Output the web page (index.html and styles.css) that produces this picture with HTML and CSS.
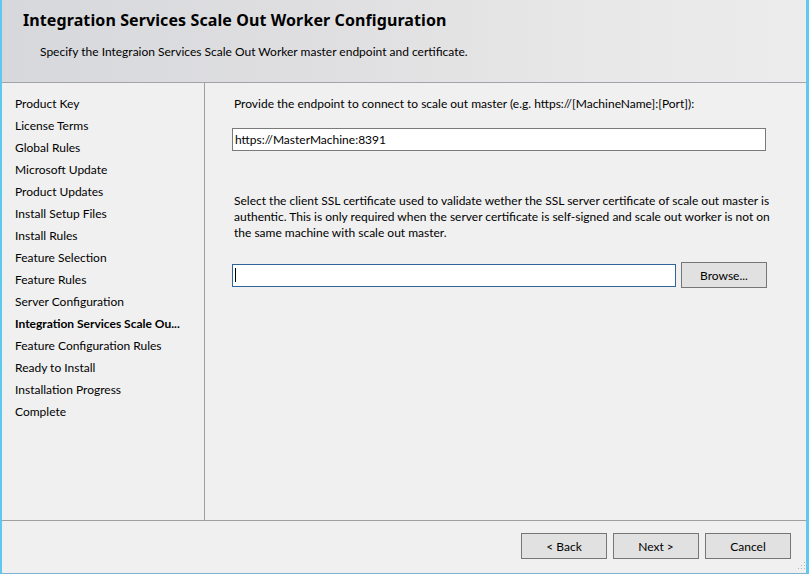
FILE: index.html
```html
<!DOCTYPE html>
<html>
<head>
<meta charset="utf-8">
<link rel="stylesheet" href="styles.css">
</head>
<body>
<div class="window">
  <div class="header">
    <h1 class="title">Integration Services Scale Out Worker Configuration</h1>
    <p class="subtitle">Specify the Integraion Services Scale Out Worker master endpoint and certificate.</p>
  </div>
  <div class="body">
    <ul class="steps">
      <li>Product Key</li>
      <li>License Terms</li>
      <li>Global Rules</li>
      <li>Microsoft Update</li>
      <li>Product Updates</li>
      <li>Install Setup Files</li>
      <li>Install Rules</li>
      <li>Feature Selection</li>
      <li>Feature Rules</li>
      <li>Server Configuration</li>
      <li class="current">Integration Services Scale Ou...</li>
      <li>Feature Configuration Rules</li>
      <li>Ready to Install</li>
      <li>Installation Progress</li>
      <li>Complete</li>
    </ul>
    <div class="content">
      <p class="label">Provide the endpoint to connect to scale out master (e.g. https://[MachineName]:[Port]):</p>
      <div class="textbox wide">https://MasterMachine:8391</div>
      <p class="para">Select the client SSL certificate used to validate wether the SSL server certificate of scale out master is<br>authentic. This is only required when the server certificate is self-signed and scale out worker is not on<br>the same machine with scale out master.</p>
      <div class="cert-row">
        <div class="textbox focused"><span class="caret"></span></div>
        <button class="btn browse">Browse...</button>
      </div>
    </div>
  </div>
  <div class="footer">
    <button class="btn">&lt; Back</button>
    <button class="btn">Next &gt;</button>
    <button class="btn">Cancel</button>
    <svg class="grip" width="10" height="10" viewBox="0 0 10 10">
      <rect x="8" y="0" width="1" height="1" fill="#b4b4b4"/>
      <rect x="5" y="3" width="1" height="1" fill="#b4b4b4"/>
      <rect x="8" y="3" width="1" height="1" fill="#b4b4b4"/>
      <rect x="2" y="6" width="1" height="1" fill="#b4b4b4"/>
      <rect x="5" y="6" width="1" height="1" fill="#b4b4b4"/>
      <rect x="8" y="6" width="1" height="1" fill="#b4b4b4"/>
    </svg>
  </div>
</div>
</body>
</html>
```
FILE: styles.css
```css
* { box-sizing: border-box; }
html, body { margin: 0; padding: 0; }
body {
  font-family: Lato, "Noto Sans", sans-serif;
  font-size: 12px;
  color: #000;
  background: #f0f0f0;
}
.window {
  width: 809px;
  height: 574px;
  display: flex;
  flex-direction: column;
  border-left: 2px solid #5ec8ee;
  border-right: 3px solid #5ec8ee;
  border-bottom: 1px solid #7ab4d4;
  background: #f0f0f0;
  position: relative;
}
.header {
  height: 83px;
  flex: none;
  border-bottom: 1px solid #a3a3ab;
  background: linear-gradient(90deg, #d7d8dc 0%, #dfdfe1 40%, #e8e8e8 75%, #ececec 100%);
  padding: 9px 0 0 21px;
}
.title {
  margin: 0;
  font-family: "Noto Sans", sans-serif;
  font-size: 16px;
  font-weight: bold;
  line-height: 22px;
  letter-spacing: 0.1px;
}
.subtitle {
  margin: 13px 0 0 17px;
  font-size: 12px;
  line-height: 16px;
}
.body {
  flex: 1;
  display: flex;
  border-bottom: 1px solid #a0a0a0;
}
.steps {
  list-style: none;
  margin: 0;
  padding: 10px 0 0 13px;
  width: 203px;
  flex: none;
  border-right: 1px solid #a0a0a0;
}
.steps li {
  line-height: 22px;
  height: 22px;
  white-space: nowrap;
}
.steps li.current { font-weight: bold; }
.content {
  flex: 1;
  padding: 10px 0 0 27px;
}
.label {
  margin: 0 0 0 2px;
  line-height: 22px;
}
.textbox {
  height: 23px;
  background: #fff;
  border: 1px solid #7a7a7a;
  padding: 0 2px;
  line-height: 21px;
}
.wide {
  width: 534px;
  margin-top: 13px;
}
.para {
  margin: 42px 0 0 2px;
  line-height: 16px;
}
.cert-row {
  display: flex;
  align-items: center;
  margin-top: 21px;
}
.cert-row .textbox {
  width: 444px;
  border-color: #2f659a;
  display: flex;
  align-items: center;
}
.caret {
  display: block;
  width: 1px;
  height: 14px;
  background: #000;
  margin-left: 0;
}
.btn {
  font-family: inherit;
  font-size: 12px;
  color: #000;
  width: 86px;
  height: 26px;
  background: #e1e1e1;
  border: 1px solid #767676;
  padding: 0;
  margin: 0;
}
.browse {
  margin-left: 5px;
}
.footer {
  height: 52px;
  flex: none;
  display: flex;
  justify-content: flex-end;
  align-items: flex-start;
  gap: 6px;
  padding: 12px 15px 0 0;
}
.grip {
  position: absolute;
  right: 0;
  bottom: 1px;
}
```
